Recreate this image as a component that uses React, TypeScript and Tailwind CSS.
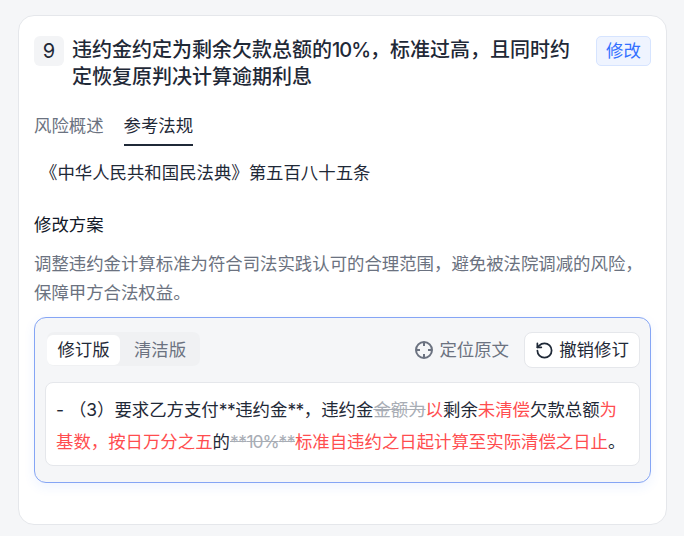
import { RotateCcw } from 'lucide-react'

const font = { fontFamily: 'Inter, "Noto Sans CJK SC", sans-serif' }

function Locate() {
  return (
    <svg width="20" height="20" viewBox="0 0 20 20" fill="none" stroke="currentColor" strokeWidth="2">
      <circle cx="10" cy="10" r="8" />
      <path d="M10 2v4M10 14v4M2 10h4M14 10h4" />
    </svg>
  )
}

export default function App() {
  return (
    <div className="w-[684px] h-[536px] overflow-hidden bg-[#f5f6f8] pt-[15px] pl-[18px] pr-[17px]" style={font}>
      <div className="h-[510px] bg-white border border-[#e5e7eb] rounded-[16px] px-[15px] pt-[20px]">
        <div className="flex items-start">
          <div className="w-[30px] h-[30px] shrink-0 rounded-[6px] bg-[#f3f4f6] text-[#1f2937] text-[20px] flex items-center justify-center">9</div>
          <h2 className="ml-[8px] w-[506px] mt-[1px] text-[#1f2937] text-[20px] leading-[27px] font-medium">
            违约金约定为剩余欠款总额的<span className="tracking-[-1px]">10%</span>，标准过高，且同时约定恢复原判决计算逾期利息
          </h2>
          <span className="ml-auto w-[55px] h-[30px] rounded-[5px] border border-[#d6e4ff] bg-[#eff4ff] text-[#3370ff] text-[17.4px] flex items-center justify-center">修改</span>
        </div>

        <div className="flex gap-[20px] mt-[22px] text-[17.4px] leading-[26px]">
          <div className="pb-[5px] text-[#6b7280]">风险概述</div>
          <div className="pb-[5px] text-[#1f2937] border-b-2 border-[#1f2937]">参考法规</div>
        </div>

        <p className="mt-[14px] pl-[6px] text-[17.4px] leading-[26px] text-[#1f2937]">
          《中华人民共和国民法典》第五百八十五条
        </p>

        <h3 className="mt-[26px] text-[17.4px] leading-[26px] text-[#111827]">修改方案</h3>
        <p className="mt-[11px] text-[17.4px] leading-[29px] text-[#6b7280]">
          调整违约金计算标准为符合司法实践认可的合理范围，避免被法院调减的风险，保障甲方合法权益。
        </p>

        <div className="mt-[10px] h-[166px] rounded-[12px] border border-[#85a5f5] bg-[#f5f6f8] px-[10px] pt-[14px] shadow-[0_4px_12px_rgba(51,112,255,0.08)]">
          <div className="flex items-start">
            <div className="ml-[2px] flex pt-[3px] pb-[1px] rounded-[7px] bg-[#f0f1f3]">
              <div className="w-[73px] h-[30px] rounded-[6px] bg-white text-[#1f2937] text-[17.4px] flex items-center justify-center">修订版</div>
              <div className="w-[80px] h-[30px] text-[#6b7280] text-[17.4px] flex items-center justify-center">清洁版</div>
            </div>
            <div className="ml-auto h-[36px] flex items-center gap-[5px] text-[#6b7280] text-[17.4px]">
              <Locate />
              <span>定位原文</span>
            </div>
            <button className="ml-[15px] h-[36px] w-[116px] rounded-[8px] border border-[#e5e7eb] bg-white text-[#1f2937] text-[17.4px] flex items-center justify-center gap-[5px]">
              <RotateCcw size={19} strokeWidth={2.2} />
              <span>撤销修订</span>
            </button>
          </div>
          <div className="mt-[14px] h-[84px] rounded-[8px] border border-[#e5e7eb] bg-white pl-[10px] pr-[8px] py-[11px] text-[17.4px] leading-[32px] text-[#1f2937]">
            - （3）要求乙方支付<span className="tracking-[-0.5px]">**</span>违约金<span className="tracking-[-0.5px]">**</span>，违约金<span className="text-[#a8adb5] line-through">金额为</span><span className="text-[#ff4d4f]">以</span>剩余<span className="text-[#ff4d4f]">未清偿</span>欠款总额<span className="text-[#ff4d4f]">为基数，按日万分之五</span>的<span className="text-[#a8adb5] line-through tracking-[-0.5px]">**<span className="tracking-[-1px]">10%</span>**</span><span className="text-[#ff4d4f]">标准自违约之日起计算至实际清偿之日止</span>。
          </div>
        </div>
      </div>
    </div>
  )
}
